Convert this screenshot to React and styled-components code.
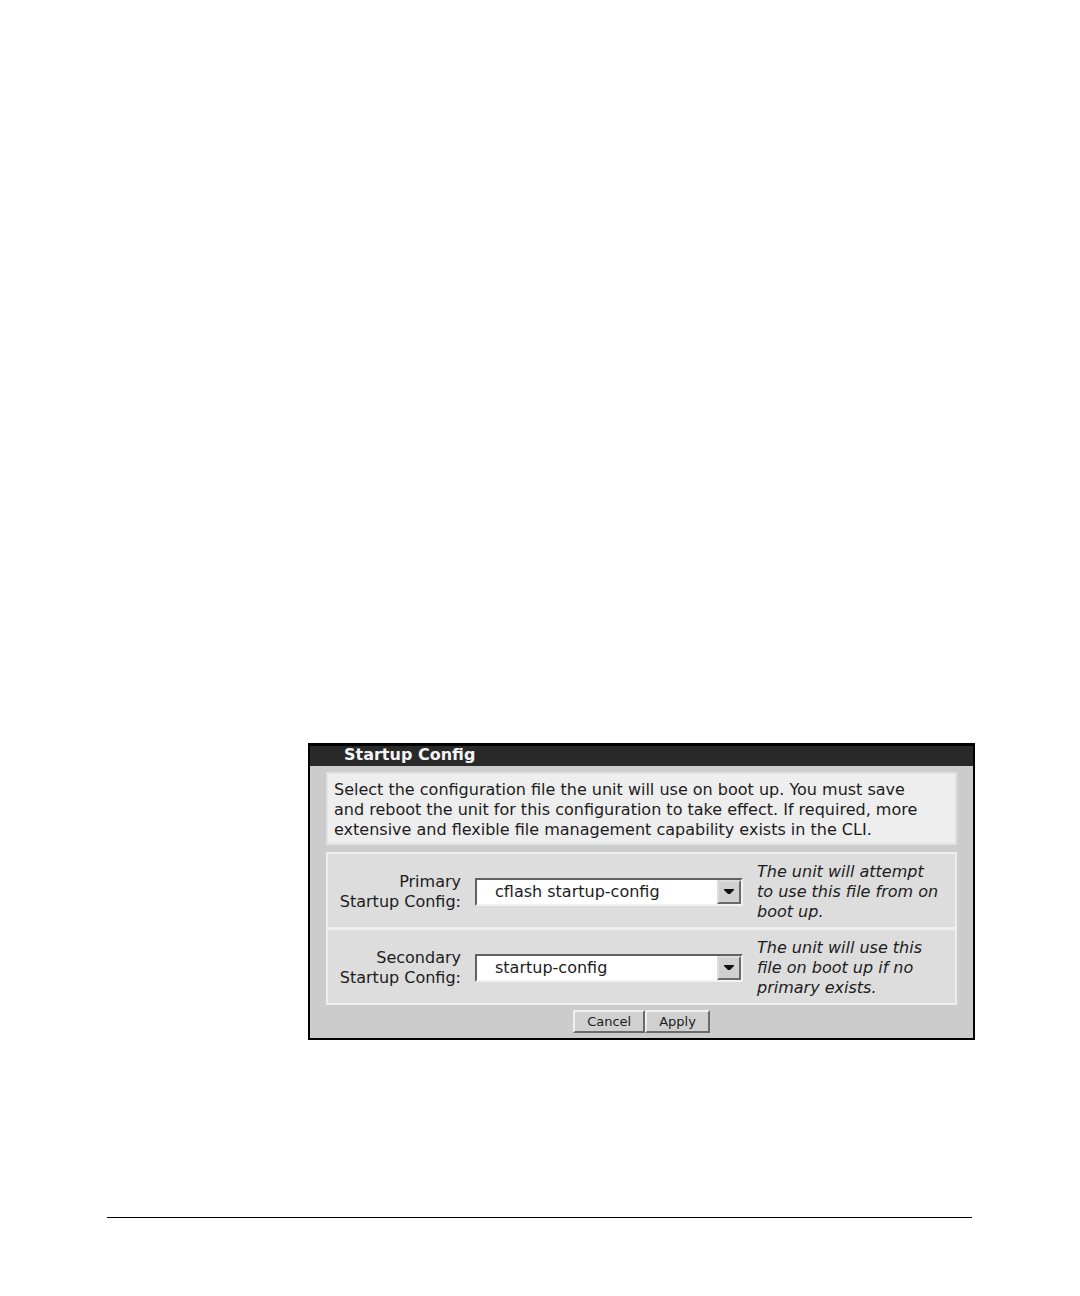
import React from "react";
import styled, { createGlobalStyle } from "styled-components";

const GlobalStyle = createGlobalStyle`
  * { box-sizing: border-box; }
  body {
    margin: 0;
    background: #fff;
    color: #1c1c1c;
    font: 16px/20px "DejaVu Sans", Verdana, sans-serif;
  }
`;

const Page = styled.main`
  padding-top: 743px;
`;

const Panel = styled.section`
  margin: 0 105px 0 308px;
  border: 2px solid #000;
  border-top-width: 3px;
  background: #ccc;
`;

const Title = styled.h1`
  margin: 0;
  padding: 0 34px 2px;
  background: #292929;
  color: #f4f4f4;
  font-size: 16px;
  line-height: 18px;
`;

const Body = styled.form`
  padding: 6px 16px 5px;
`;

const Intro = styled.p`
  margin: 0 0 7px;
  padding: 6px 6px 3px;
  border: 2px solid #e2e2e2;
  background: #eee;
`;

const Rows = styled.div`
  border: 2px solid #eee;
  background: #ddd;
`;

const Row = styled.div`
  display: grid;
  grid-template-columns: 133px 268px 1fr;
  column-gap: 14px;
  align-items: center;
  padding: 8px 0 5px;

  & + & {
    border-top: 3px solid #eee;
  }
`;

const Label = styled.label`
  text-align: right;
`;

const Hint = styled.span`
  font-style: italic;
  white-space: pre-line;
`;

const SelectFrame = styled.div`
  display: grid;
  grid-template-columns: 1fr 24px;
  height: 28px;
  border: 2px solid #626262;
  border-right-color: #f2f2f2;
  border-bottom-color: #f2f2f2;
  background: #fff;
`;

const Select = styled.select`
  grid-area: 1 / 1 / 2 / 3;
  width: 100%;
  margin: 0;
  padding: 0 28px 0 18px;
  border: 0;
  appearance: none;
  background: transparent;
  color: inherit;
  font: inherit;
`;

const Arrow = styled.span`
  grid-area: 1 / 2;
  display: grid;
  place-items: center;
  border: 2px solid #dcdcdc;
  border-right-color: #6a6a6a;
  border-bottom-color: #6a6a6a;
  background: #d0d0d0;
  pointer-events: none;
`;

const Actions = styled.div`
  display: flex;
  justify-content: center;
  padding-top: 5px;
`;

const Button = styled.button`
  height: 23px;
  padding: 0 12px;
  border: 2px solid #6a6a6a;
  border-top-color: #f0f0f0;
  border-left-color: #f0f0f0;
  background: #d0d0d0;
  color: #1c1c1c;
  font: 13px/18px "DejaVu Sans", Verdana, sans-serif;
`;

const Rule = styled.hr`
  height: 1px;
  margin: 177px 108px 0 107px;
  border: 0;
  background: #000;
`;

function ConfigRow({ id, name, value, hint }) {
  return (
    <Row>
      <Label htmlFor={id}>
        {name}
        <br />
        Startup Config:
      </Label>
      <SelectFrame>
        <Select id={id} defaultValue={value} aria-describedby={id + "-hint"}>
          <option>{value}</option>
        </Select>
        <Arrow aria-hidden="true">
          <svg width="10" height="6" viewBox="0 0 10 6">
            <path d="M0 0H10V1L6 5H4L0 1Z" fill="#111" />
          </svg>
        </Arrow>
      </SelectFrame>
      <Hint id={id + "-hint"}>{hint}</Hint>
    </Row>
  );
}

export default function App() {
  return (
    <Page>
      <GlobalStyle />
      <Panel>
        <Title>Startup Config</Title>
        <Body onSubmit={(e) => e.preventDefault()}>
          <Intro>
            Select the configuration file the unit will use on boot up. You must save
            <br />
            and reboot the unit for this configuration to take effect. If required, more
            <br />
            extensive and flexible file management capability exists in the CLI.
          </Intro>
          <Rows>
            <ConfigRow
              id="primary"
              name="Primary"
              value="cflash startup-config"
              hint={"The unit will attempt\nto use this file from on\nboot up."}
            />
            <ConfigRow
              id="secondary"
              name="Secondary"
              value="startup-config"
              hint={"The unit will use this\nfile on boot up if no\nprimary exists."}
            />
          </Rows>
          <Actions>
            <Button type="button">Cancel</Button>
            <Button type="submit">Apply</Button>
          </Actions>
        </Body>
      </Panel>
      <Rule />
    </Page>
  );
}
